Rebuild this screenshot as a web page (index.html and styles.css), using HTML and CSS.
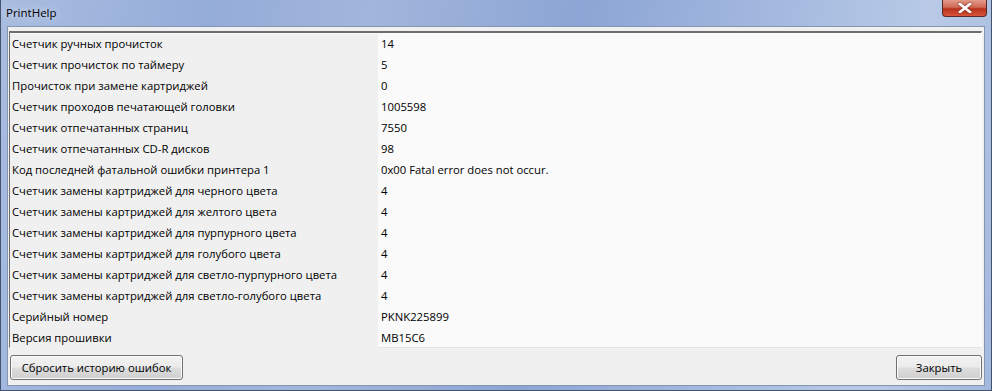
FILE: index.html
```html
<!DOCTYPE html>
<html lang="ru">
<head>
    <meta charset="UTF-8">
    <title>PrintHelp</title>
    <link rel="stylesheet" href="styles.css">
</head>
<body>
    <div class="window">
        <div class="titlebar">
            <span class="title">PrintHelp</span>
            <div class="close-btn">
                <svg width="14" height="10" viewBox="0 0 14 10">
                    <path d="M2 1 L12 9 M12 1 L2 9" stroke="#fff" stroke-width="2.6" stroke-linecap="square"/>
                </svg>
            </div>
        </div>
        <div class="client">
            <div class="grid">
                <div class="row"><div class="name">Счетчик ручных прочисток</div><div class="val">14</div></div>
                <div class="row"><div class="name">Счетчик прочисток по таймеру</div><div class="val">5</div></div>
                <div class="row"><div class="name">Прочисток при замене картриджей</div><div class="val">0</div></div>
                <div class="row"><div class="name">Счетчик проходов печатающей головки</div><div class="val">1005598</div></div>
                <div class="row"><div class="name">Счетчик отпечатанных страниц</div><div class="val">7550</div></div>
                <div class="row"><div class="name">Счетчик отпечатанных CD-R дисков</div><div class="val">98</div></div>
                <div class="row"><div class="name">Код последней фатальной ошибки принтера 1</div><div class="val">0x00 Fatal error does not occur.</div></div>
                <div class="row"><div class="name">Счетчик замены картриджей для черного цвета</div><div class="val">4</div></div>
                <div class="row"><div class="name">Счетчик замены картриджей для желтого цвета</div><div class="val">4</div></div>
                <div class="row"><div class="name">Счетчик замены картриджей для пурпурного цвета</div><div class="val">4</div></div>
                <div class="row"><div class="name">Счетчик замены картриджей для голубого цвета</div><div class="val">4</div></div>
                <div class="row"><div class="name">Счетчик замены картриджей для светло-пурпурного цвета</div><div class="val">4</div></div>
                <div class="row"><div class="name">Счетчик замены картриджей для светло-голубого цвета</div><div class="val">4</div></div>
                <div class="row"><div class="name">Серийный номер</div><div class="val">PKNK225899</div></div>
                <div class="row"><div class="name">Версия прошивки</div><div class="val">MB15C6</div></div>
            </div>
            <div class="buttons">
                <button class="btn reset-btn">Сбросить историю ошибок</button>
                <button class="btn close-dlg">Закрыть</button>
            </div>
        </div>
    </div>
</body>
</html>
```

FILE: styles.css
```css
body {
    margin: 0;
    font-family: "Open Sans", "Noto Sans", sans-serif;
    font-size: 11.3px;
    color: #000;
    background: #8fa6cf;
}
.window {
    width: 992px;
    height: 391px;
    box-sizing: border-box;
    padding: 0 6px 4px 6px;
    display: flex;
    flex-direction: column;
    background: linear-gradient(100deg, #a9bde0 0%, #94acd8 20%, #a2b6db 35%, #8ca5d4 55%, #9fb5dd 70%, #b8cae6 88%, #a3b8de 100%);
    border-left: 1px solid #44526e;
    border-right: 1px solid #44526e;
    border-bottom: 1px solid #44526e;
}
.titlebar {
    height: 26px;
    display: flex;
    align-items: flex-start;
    justify-content: space-between;
    flex-shrink: 0;
}
.title {
    margin-left: -1px;
    margin-top: 5px;
    font-size: 11.5px;
    color: #000;
    text-shadow: 0 0 8px rgba(255,255,255,0.9);
}
.close-btn {
    width: 45px;
    height: 17px;
    margin-right: -2px;
    border: 1px solid #5a2a25;
    border-top: none;
    border-radius: 0 0 4px 4px;
    background: linear-gradient(#e39a8a 0%, #d06a55 45%, #b8321c 55%, #d8543a 100%);
    display: flex;
    align-items: center;
    justify-content: center;
    box-sizing: border-box;
}
.close-btn svg {
    filter: drop-shadow(0 0 1px #6a2016);
}
.client {
    flex: 1;
    background: #f0f0f0;
    border: 1px solid #8596b3;
    padding: 4px 2px 0 1px;
    display: flex;
    flex-direction: column;
}
.grid {
    border-top: 2px solid #6d6d6d;
    border-left: 1px solid #6d6d6d;
    border-right: 1px solid #fff;
    border-bottom: 1px solid #e3e3e3;
    background: #fafafa;
    height: 317px;
    box-sizing: border-box;
    padding-top: 1px;
}
.row {
    display: flex;
    height: 21px;
    line-height: 20px;
}
.name {
    width: 368px;
    padding-left: 2px;
    box-sizing: border-box;
    background: #f0f0f0;
    flex-shrink: 0;
}
.val {
    padding-left: 3px;
}
.buttons {
    display: flex;
    justify-content: space-between;
    padding: 7px 0 0 1px;
}
.btn {
    font-family: inherit;
    font-size: 11.3px;
    white-space: nowrap;
    height: 25px;
    border: 1px solid #707070;
    border-radius: 3px;
    background: linear-gradient(#f2f2f2 0%, #ebebeb 48%, #dddddd 52%, #cfcfcf 100%);
    box-shadow: inset 0 0 0 1px #fcfcfc;
    padding: 0 4px;
}
.reset-btn {
    width: 173px;
}
.close-dlg {
    width: 86px;
}
```
